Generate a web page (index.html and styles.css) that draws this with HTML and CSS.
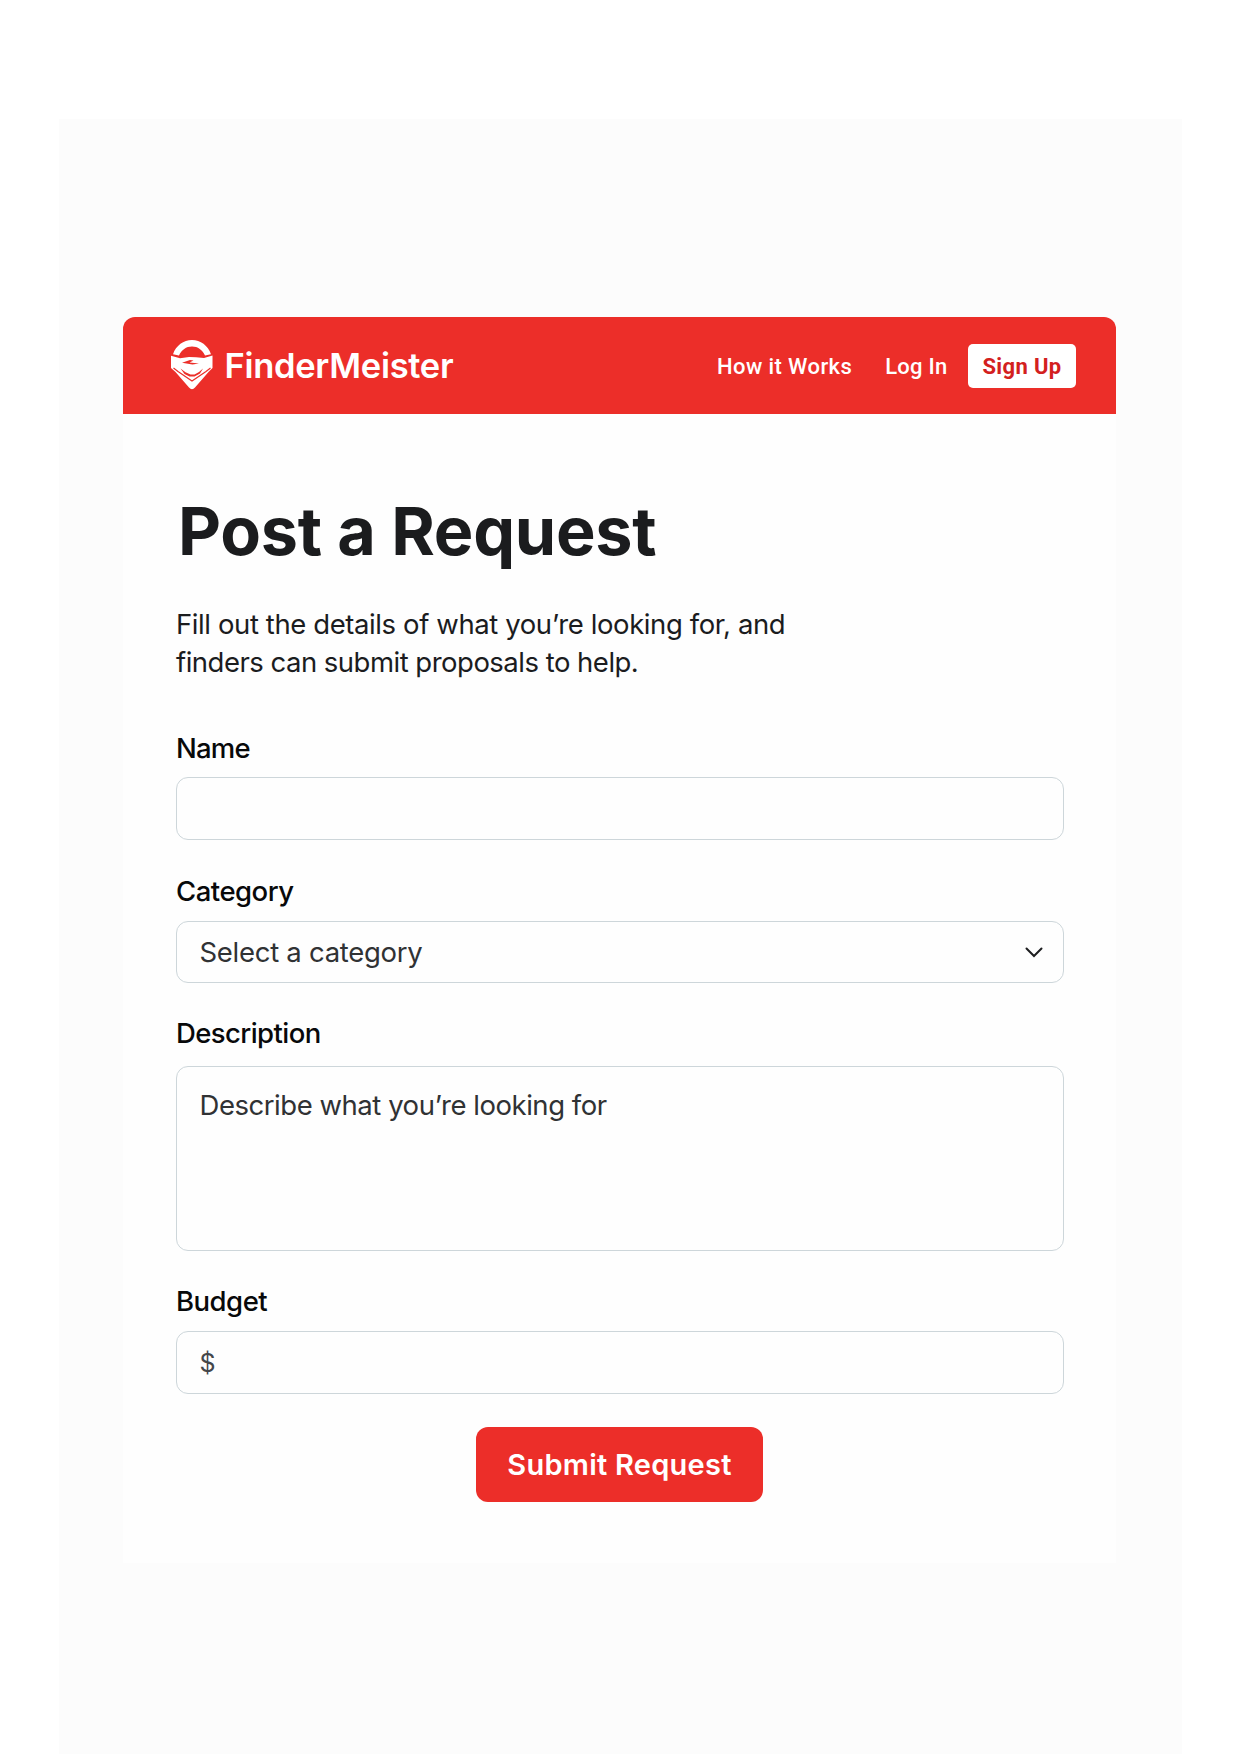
FILE: index.html
```html
<!DOCTYPE html>
<html lang="en">
<head>
<meta charset="utf-8">
<title>FinderMeister – Post a Request</title>
<link rel="stylesheet" href="styles.css">
</head>
<body>
<div class="backdrop">
  <div class="card">
    <header class="header">
      <a class="brand">
        <svg class="logo" viewBox="0 0 42 50" aria-hidden="true">
          <path d="M2 14.200C5 5.500 12.500 0 21 0s16 5.500 19 14.200l-6 1.300C31.500 10 26.800 6.600 21 6.600S10.500 10 8 15.500Z" fill="#fff"/>
          <path d="M0 15.800l9 2.400 9-1.200 7 .3 8 .8 8.500-2.500V28L37.500 32 24 47.500q-3 3.400-6 0L4.500 32 0 28Z" fill="#fff"/>
          <path d="M2.500 28 7 31.500l14 9.500 14-9.500 4.500-3.500" fill="none" stroke="#ec2e29" stroke-width="1.200"/>
          <path d="M11 22.800l8-2.800 3.500.6-4 1.800 9.500 1-6.500 1.200Z" fill="#ec2e29"/>
          <path d="M9.500 28.500l5 3.700 5 2.300h4L28 32l4-3.500-3 5-5.500 3h-5l-5-2.500Z" fill="#ec2e29"/>
        </svg>
        <span class="brand-name">FinderMeister</span>
      </a>
      <nav class="nav">
        <a class="nav-link how">How it Works</a>
        <a class="nav-link login">Log In</a>
        <a class="signup">Sign Up</a>
      </nav>
    </header>
    <main class="content">
      <h1 class="title">Post a Request</h1>
      <p class="intro"><span class="intro-a">Fill out the details of what you’re looking for, and</span><br><span class="intro-b">finders can submit proposals to help.</span></p>
      <div class="form">
        <div class="field">
          <div class="label l-name">Name</div>
          <div class="control"></div>
        </div>
        <div class="field">
          <div class="label l-category">Category</div>
          <div class="control select">
            <span class="hint h-select">Select a category</span>
            <svg class="chevron" viewBox="0 0 18 11" aria-hidden="true"><path d="M1.500 1.500 9 9l7.500-7.500" fill="none" stroke="#1d1e20" stroke-width="2" stroke-linecap="round"/></svg>
          </div>
        </div>
        <div class="field description">
          <div class="label l-description">Description</div>
          <div class="control area"><span class="hint h-describe">Describe what you’re looking for</span></div>
        </div>
        <div class="field budget">
          <div class="label l-budget">Budget</div>
          <div class="control"><span class="hint dollar">$</span></div>
        </div>
        <button class="submit" type="button"><span>Submit Request</span></button>
      </div>
    </main>
  </div>
</div>
</body>
</html>
```
FILE: styles.css
```css
* { box-sizing: border-box; }
body {
  margin: 0;
  background: #fff;
  font-family: Inter, "Liberation Sans", sans-serif;
  color: #1b1c1e;
}
.backdrop {
  width: 1123px;
  height: 1635px;
  margin: 119px 0 0 59px;
  padding: 198px 66px 0 64px;
  background: #fcfcfc;
}
.card {
  height: 1246px;
  background: #fefefe;
  border-radius: 13px 13px 0 0;
}
.header {
  height: 96.500px;
  display: flex;
  align-items: center;
  justify-content: space-between;
  padding: 0 40px 0 48px;
  background: #ec2e29;
  border-radius: 12px 12px 0 0;
  color: #fff;
}
.brand { display: flex; align-items: center; gap: 11.500px; }
.logo { width: 42px; height: 50px; }
.brand-name { font-size: 34.500px; font-weight: 600; line-height: 42px; letter-spacing: -0.300px; padding-top: 2px; }
.nav { display: flex; align-items: center; padding-top: 2px; }
.nav-link, .signup { font-family: Roboto, sans-serif; font-size: 22px; font-weight: 500; line-height: 44px; white-space: nowrap; }
.nav-link { padding-top: 2px; }
.how { margin-right: 33px; letter-spacing: 0.400px; }
.login { margin-right: 20.500px; letter-spacing: 0.250px; }
.signup {
  width: 108px;
  height: 44px;
  border-radius: 5px;
  background: #fff;
  color: #d3201e;
  font-weight: 700;
  line-height: 46px;
  letter-spacing: 0.350px;
  text-align: center;
}
.content { padding: 77px 52px 0 53px; }
.title { margin: 0; font-size: 66.500px; line-height: 80px; font-weight: 700; margin-left: 2px; letter-spacing: -0.260px; white-space: nowrap; }
.intro { margin: 34px 0 50px; font-size: 27.500px; line-height: 38px; font-weight: 400; white-space: nowrap; }
.intro-a { letter-spacing: -0.400px; }
.intro-b { letter-spacing: -0.510px; }
.form { display: flex; flex-direction: column; }
.field { height: 143.500px; }
.label { height: 34px; margin-bottom: 12px; font-size: 27.500px; line-height: 34px; font-weight: 500; letter-spacing: -0.500px; color: #08090a; }
.l-name { letter-spacing: -0.800px; }
.l-category { margin-bottom: 13px; }
.l-description { letter-spacing: -0.580px; }
.control {
  height: 63px;
  display: flex;
  align-items: center;
  justify-content: space-between;
  padding: 0 20px 0 22.500px;
  border: 1.500px solid #cdd6da;
  border-radius: 12px;
}
.select { height: 62px; }
.hint { font-size: 27.500px; line-height: 34px; font-weight: 400; color: #303234; white-space: nowrap; }
.h-select { letter-spacing: -0.280px; padding-bottom: 1px; }
.h-describe { letter-spacing: -0.460px; }
.chevron { width: 18px; height: 11px; }
.description { height: 268px; margin-top: -1.500px; }
.description .label { margin-bottom: 15.500px; }
.area { height: 185px; align-items: flex-start; padding-top: 21px; }
.budget { height: 142.500px; }
.budget .label { margin-bottom: 13px; }
.dollar { font-size: 25px; padding-top: 1px; color: #44474a; }
.submit {
  width: 287px;
  height: 75px;
  margin-left: 300px;
  padding: 0;
  border: 0;
  border-radius: 12px;
  background: #ec2e29;
  color: #fff;
  font: 600 29px/75px Inter, sans-serif;
  letter-spacing: 0.250px;
}
```
